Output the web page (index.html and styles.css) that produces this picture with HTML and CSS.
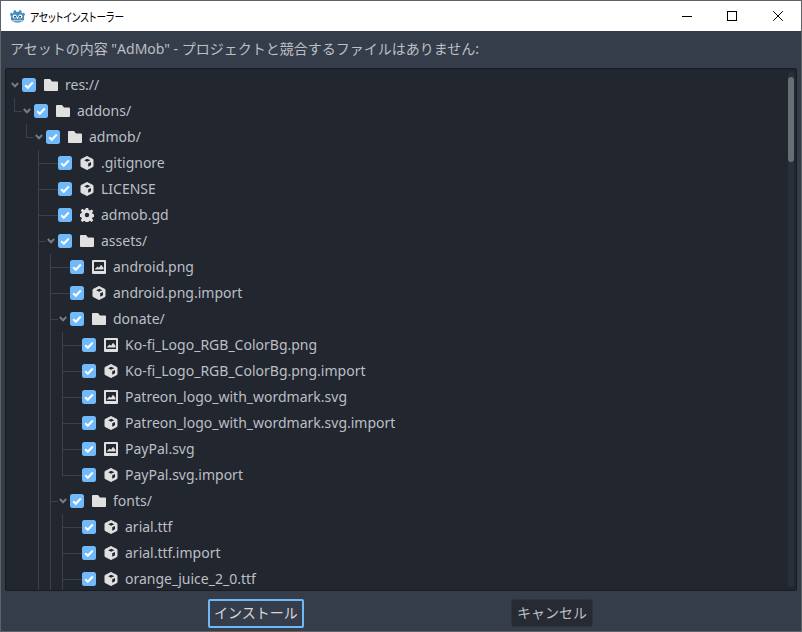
FILE: index.html
```html
<!DOCTYPE html>
<html lang="ja">
<head>
<meta charset="utf-8">
<title>アセットインストーラー</title>
<link rel="stylesheet" href="styles.css">
</head>
<body>
<svg class="defs" width="0" height="0" aria-hidden="true">
  <symbol id="i-folder" viewBox="0 0 14 12"><path d="M1 0h5l2 2.500h5a1 1 0 0 1 1 1V11a1 1 0 0 1-1 1H1a1 1 0 0 1-1-1V1a1 1 0 0 1 1-1z" fill="#e0e0e0"/></symbol>
  <symbol id="i-file" viewBox="0 0 14 14"><path d="M7 .5l6 3v7l-6 3-6-3v-7z" fill="#e0e0e0" stroke="#e0e0e0" stroke-linejoin="round"/><path d="M4.200 4.200L7.300 2.700l3 1.500L7.100 5.800z" fill="#21262f"/><path d="M8.200 7.300l2.800-1.400v3.300l-2.800 1.600z" fill="#21262f"/></symbol>
  <symbol id="i-gear" viewBox="0 0 14 14"><path d="M5.800 0h2.400l.4 2 1.300.6 1.700-1.200 1.700 1.700-1.200 1.700.6 1.300 2 .4v2.400l-2 .4-.6 1.300 1.200 1.700-1.700 1.700-1.700-1.200-1.300.6-.4 2H5.800l-.4-2-1.300-.6-1.700 1.200-1.700-1.700 1.200-1.700-.6-1.300-2-.4V5.800l2-.4.6-1.300-1.200-1.700 1.700-1.700 1.700 1.200 1.300-.6z" fill="#e0e0e0"/><circle cx="7" cy="7" r="2.200" fill="#21262f"/></symbol>
  <symbol id="i-image" viewBox="0 0 14 14"><path fill-rule="evenodd" d="M1 0h12a1 1 0 0 1 1 1v12a1 1 0 0 1-1 1H1a1 1 0 0 1-1-1V1a1 1 0 0 1 1-1zM2 2v9h10V2z" fill="#e0e0e0"/><path d="M2.500 9.500l3-3 1.500 1.200L9 4.800l2.500 3v1.700z" fill="#e0e0e0"/></symbol>
  <symbol id="i-check" viewBox="0 0 14 14"><rect width="14" height="14" rx="2.500" fill="#70b9fa"/><path d="M3.200 7.300l2.600 2.500 5-5.300" fill="none" stroke="#fff" stroke-width="2"/></symbol>
  <symbol id="i-arrow" viewBox="0 0 8 6"><path d="M.8 1L4 4.300 7.200 1" fill="none" stroke="#777b83" stroke-width="2"/></symbol>
</svg>

<div class="window">
  <header class="titlebar">
    <svg class="logo" viewBox="0 0 16 16" aria-hidden="true">
      <path d="M6 1l.5 1.800h3L10 1l2.300.8-.1 2 1 .9 1.700-.9L16 5.600l-1 2.200v3.700c-2.500 4-11.500 4-14 0V7.800L0 5.600l1.100-1.800 1.700.9 1-.9-.1-2z" fill="#478cbf"/>
      <circle cx="5" cy="8" r="2.200" fill="#fff"/><circle cx="11" cy="8" r="2.200" fill="#fff"/>
      <circle cx="5.300" cy="8.200" r="1.100" fill="#414042"/><circle cx="10.700" cy="8.200" r="1.100" fill="#414042"/>
      <rect x="7.400" y="8.500" width="1.200" height="2" fill="#fff"/>
      <path d="M2.500 12h11v1h-11z" fill="#d5e6f2"/>
    </svg>
    <span class="title-text">アセットインストーラー</span>
    <div class="controls">
      <svg class="ctl" viewBox="0 0 10 10" aria-hidden="true"><path d="M1 5.500h10" stroke="#000" fill="none"/></svg>
      <svg class="ctl" viewBox="0 0 10 10" aria-hidden="true"><rect x=".5" y=".5" width="9" height="9" stroke="#000" fill="none"/></svg>
      <svg class="ctl" viewBox="0 0 10 10" aria-hidden="true"><path d="M.2.200l9.600 9.600M9.800.2L.2 9.800" stroke="#000" fill="none" stroke-width="1"/></svg>
    </div>
  </header>

  <main class="body">
    <p class="message">アセットの内容 "AdMob" - プロジェクトと競合するファイルはありません:</p>

    <div class="tree">
      <div class="scrollbar"><div class="grabber"></div></div>
      <ul class="root">
        <li class="node end">
          <div class="row"><svg class="arrow"><use href="#i-arrow"/></svg><svg class="check"><use href="#i-check"/></svg><svg class="ic folder"><use href="#i-folder"/></svg><span>res://</span></div>
          <ul>
            <li class="node branch end">
              <div class="row"><svg class="arrow"><use href="#i-arrow"/></svg><svg class="check"><use href="#i-check"/></svg><svg class="ic folder"><use href="#i-folder"/></svg><span>addons/</span></div>
              <ul>
                <li class="node branch end">
                  <div class="row"><svg class="arrow"><use href="#i-arrow"/></svg><svg class="check"><use href="#i-check"/></svg><svg class="ic folder"><use href="#i-folder"/></svg><span>admob/</span></div>
                  <ul>
                    <li class="node"><div class="row"><svg class="check"><use href="#i-check"/></svg><svg class="ic"><use href="#i-file"/></svg><span>.gitignore</span></div></li>
                    <li class="node"><div class="row"><svg class="check"><use href="#i-check"/></svg><svg class="ic"><use href="#i-file"/></svg><span>LICENSE</span></div></li>
                    <li class="node"><div class="row"><svg class="check"><use href="#i-check"/></svg><svg class="ic"><use href="#i-gear"/></svg><span>admob.gd</span></div></li>
                    <li class="node branch">
                      <div class="row"><svg class="arrow"><use href="#i-arrow"/></svg><svg class="check"><use href="#i-check"/></svg><svg class="ic folder"><use href="#i-folder"/></svg><span>assets/</span></div>
                      <ul>
                        <li class="node"><div class="row"><svg class="check"><use href="#i-check"/></svg><svg class="ic"><use href="#i-image"/></svg><span>android.png</span></div></li>
                        <li class="node"><div class="row"><svg class="check"><use href="#i-check"/></svg><svg class="ic"><use href="#i-file"/></svg><span>android.png.import</span></div></li>
                        <li class="node branch">
                          <div class="row"><svg class="arrow"><use href="#i-arrow"/></svg><svg class="check"><use href="#i-check"/></svg><svg class="ic folder"><use href="#i-folder"/></svg><span>donate/</span></div>
                          <ul>
                            <li class="node"><div class="row"><svg class="check"><use href="#i-check"/></svg><svg class="ic"><use href="#i-image"/></svg><span>Ko-fi_Logo_RGB_ColorBg.png</span></div></li>
                            <li class="node"><div class="row"><svg class="check"><use href="#i-check"/></svg><svg class="ic"><use href="#i-file"/></svg><span>Ko-fi_Logo_RGB_ColorBg.png.import</span></div></li>
                            <li class="node"><div class="row"><svg class="check"><use href="#i-check"/></svg><svg class="ic"><use href="#i-image"/></svg><span>Patreon_logo_with_wordmark.svg</span></div></li>
                            <li class="node"><div class="row"><svg class="check"><use href="#i-check"/></svg><svg class="ic"><use href="#i-file"/></svg><span>Patreon_logo_with_wordmark.svg.import</span></div></li>
                            <li class="node"><div class="row"><svg class="check"><use href="#i-check"/></svg><svg class="ic"><use href="#i-image"/></svg><span>PayPal.svg</span></div></li>
                            <li class="node end"><div class="row"><svg class="check"><use href="#i-check"/></svg><svg class="ic"><use href="#i-file"/></svg><span>PayPal.svg.import</span></div></li>
                          </ul>
                        </li>
                        <li class="node branch">
                          <div class="row"><svg class="arrow"><use href="#i-arrow"/></svg><svg class="check"><use href="#i-check"/></svg><svg class="ic folder"><use href="#i-folder"/></svg><span>fonts/</span></div>
                          <ul>
                            <li class="node"><div class="row"><svg class="check"><use href="#i-check"/></svg><svg class="ic"><use href="#i-file"/></svg><span>arial.ttf</span></div></li>
                            <li class="node"><div class="row"><svg class="check"><use href="#i-check"/></svg><svg class="ic"><use href="#i-file"/></svg><span>arial.ttf.import</span></div></li>
                            <li class="node"><div class="row"><svg class="check"><use href="#i-check"/></svg><svg class="ic"><use href="#i-file"/></svg><span>orange_juice_2_0.ttf</span></div></li>
                          </ul>
                        </li>
                      </ul>
                    </li>
                  </ul>
                </li>
              </ul>
            </li>
          </ul>
        </li>
      </ul>
    </div>

    <footer class="actions">
      <button class="btn primary" type="button">インストール</button>
      <button class="btn" type="button">キャンセル</button>
    </footer>
  </main>
</div>
</body>
</html>
```

FILE: styles.css
```css
html, body {
  margin: 0;
  padding: 0;
  width: 802px;
  height: 632px;
  overflow: hidden;
}

.defs {
  position: absolute;
}

.window {
  box-sizing: border-box;
  width: 802px;
  height: 632px;
  border: 1px solid #5f6266;
  display: flex;
  flex-direction: column;
  background: #363d4a;
}

.titlebar {
  height: 30px;
  background: #fff;
  display: flex;
  align-items: center;
  padding-left: 9px;
  flex: none;
}

.logo {
  width: 15px;
  height: 15px;
  margin-right: 5px;
}

.title-text {
  font: 12px "Noto Sans CJK JP", sans-serif;
  font-feature-settings: "palt";
  transform: scaleX(0.81);
  transform-origin: left center;
  color: #000;
}

.controls {
  margin-left: auto;
  display: flex;
  height: 100%;
}

.ctl {
  width: 10px;
  height: 10px;
  padding: 10px 18px;
  overflow: visible;
}

.body {
  flex: 1;
  display: flex;
  flex-direction: column;
  min-height: 0;
}

.message {
  margin: 0;
  height: 37px;
  padding-left: 9px;
  font: 14px/35px "Noto Sans", "Noto Sans CJK JP", sans-serif;
  color: #bcbfc4;
  flex: none;
}

.tree {
  position: relative;
  box-sizing: border-box;
  margin: 0 4px 0 4px;
  height: 523px;
  background: #21262f;
  border: 1px solid #181b21;
  border-radius: 2px;
  overflow: hidden;
  flex: none;
}

.scrollbar {
  position: absolute;
  top: 3px;
  right: 2px;
  bottom: 3px;
  width: 6px;
  border-radius: 3px;
  background: #2a2f39;
}

.grabber {
  margin-top: 5px;
  height: 85px;
  border-radius: 3px;
  background: #696d75;
}

.tree ul {
  list-style: none;
  margin: 0;
  padding: 0 0 0 12px;
}

.tree .root {
  padding: 3px 0 0 5px;
}

.node {
  position: relative;
}

.node::before {
  content: "";
  position: absolute;
  left: -9px;
  top: 0;
  width: 19px;
  height: 13px;
  border-left: 1px solid #3b414c;
  border-bottom: 1px solid #3b414c;
}

.node.branch::before {
  width: 7px;
}

.node::after {
  content: "";
  position: absolute;
  left: -9px;
  top: 13px;
  bottom: 0;
  border-left: 1px solid #3b414c;
}

.node.end::after {
  display: none;
}

.root > .node::before {
  display: none;
}

.row {
  position: relative;
  height: 26px;
  display: flex;
  align-items: center;
  padding-left: 11px;
  font: 14px "Noto Sans", sans-serif;
  color: #bcbfc4;
  white-space: nowrap;
}

.row span {
  margin-top: -2px;
}

.arrow {
  position: absolute;
  left: 0;
  top: 10px;
  width: 8px;
  height: 6px;
}

.check {
  width: 14px;
  height: 14px;
  flex: none;
  margin-right: 8px;
}

.ic {
  width: 14px;
  height: 14px;
  flex: none;
  margin-right: 7px;
}

.ic.folder {
  height: 12px;
}

.actions {
  flex: 1;
  display: flex;
  justify-content: space-evenly;
  align-items: flex-start;
  padding: 8px 1px 0 0;
}

.btn {
  box-sizing: border-box;
  height: 28px;
  padding: 0 5px 2px;
  border: 1px solid #2e343e;
  border-radius: 3px;
  background: #252a33;
  color: #bcbfc4;
  font: 14px/1 "Noto Sans CJK JP", sans-serif;
}

.btn.primary {
  height: 29px;
  border: 2px solid #70b8f5;
  background: #363d4a;
  border-radius: 2px;
  color: #d6d8db;
  padding: 0 4px 3px;
}
```
